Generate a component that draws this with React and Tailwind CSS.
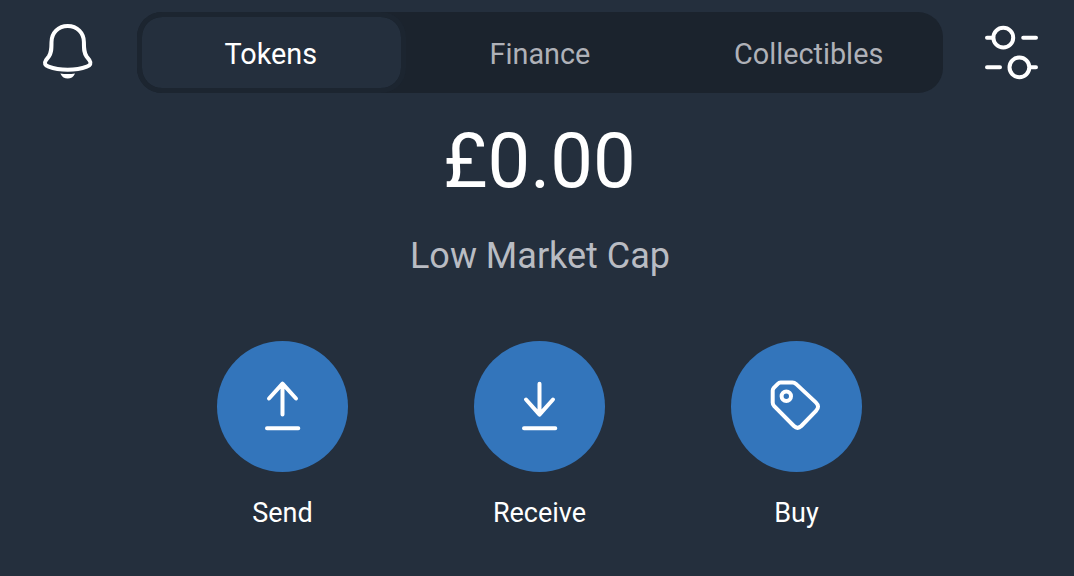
import React, { useState } from 'react';

const BellIcon = () => (
  <svg width="56" height="58" viewBox="0 0 56 58" fill="none" stroke="white" strokeWidth="4" strokeLinejoin="round">
    <path d="M27.7 4C18.2 4 11.5 11 11.5 20C11.5 28 11.3 31 8.8 34.5L5.9 38.3C3.8 41.4 5 43.2 8.6 44.6C19.5 48.7 35.9 48.7 46.8 44.6C50.4 43.2 51.6 41.4 49.5 38.3L46.6 34.5C44.1 31 43.9 28 43.9 20C43.9 11 37.2 4 27.7 4Z" />
    <path d="M20.3 51.4Q27.7 52.6 35.1 51.4Q32.5 56.6 27.7 56.6Q22.9 56.6 20.3 51.4Z" fill="white" stroke="none" />
  </svg>
);

const SlidersIcon = () => (
  <svg width="58" height="58" viewBox="0 0 58 58" fill="none" stroke="white" strokeWidth="4" strokeLinecap="round">
    <circle cx="20.3" cy="13.7" r="9.9" />
    <circle cx="36.4" cy="43.3" r="9.9" />
    <path d="M4 13.7H9M40.2 13.7H53M4 43.3H17M48 43.3H53" />
  </svg>
);

const actions = [
  {
    label: 'Send',
    icon: <path d="M65.5 43V73.5M52 57.5L65.5 42.7L79 57.5M50 87.3H81.3" />,
  },
  {
    label: 'Receive',
    icon: <path d="M65.5 42.7V73.5M52 58.5L65.5 73.7L79 58.5M50 87.3H81.3" />,
  },
  {
    label: 'Buy',
    icon: (
      <>
        <path d="M49.5 41.6H61.5Q63.5 41.6 65 42.9L84.8 61.4Q89.2 65.6 85 69.9L70.3 85Q66.6 88.6 62.9 85L43.2 65.2Q41.7 63.6 41.7 61.5V49.5Q41.7 48 42.8 46.8L46.8 42.8Q48 41.6 49.5 41.6Z" />
        <circle cx="55.3" cy="55.3" r="4.7" />
      </>
    ),
  },
];

const tabs = ['Tokens', 'Finance', 'Collectibles'];

const App = () => {
  const [activeTab, setActiveTab] = useState('Tokens');

  return (
    <div className="h-[576px] w-[1074px] overflow-hidden bg-[#242f3d] font-[Roboto,sans-serif] text-white">
      {/* Header */}
      <header className="flex items-start pt-3 pl-10">
        <button className="mt-2.5">
          <BellIcon />
        </button>

        <div className="ml-[41px] flex h-[81px] w-[806px] rounded-[25px] bg-[#1b232d]">
          {tabs.map((tab) => (
            <button
              key={tab}
              onClick={() => setActiveTab(tab)}
              className={`w-1/3 rounded-[25px] border-5 pt-[3px] text-[28.8px] leading-none ${
                activeTab === tab ? 'border-[#1c2530] bg-[#242f3d] bg-clip-padding pr-px text-white' : 'border-transparent text-[#afb1b8]'
              }`}
            >
              {tab}
            </button>
          ))}
        </div>

        <button className="mt-3 ml-10">
          <SlidersIcon />
        </button>
      </header>

      {/* Balance */}
      <div className="flex flex-col items-center pl-[5px]">
        <div className="mt-[30px] text-[76px] leading-[77px]">£0.00</div>
        <div className="mt-9 pl-px text-[36px] leading-[40px] text-[#b9bcc3]">Low Market Cap</div>
      </div>

      {/* Actions */}
      <div className="mt-[65px] flex justify-center gap-[126px] pl-[5px]">
        {actions.map(({ label, icon }) => (
          <button key={label} className="flex w-[131px] flex-col items-center">
            <span className="size-[131px] rounded-full bg-[#3375bb]">
              <svg
                width="131"
                height="131"
                viewBox="0 0 131 131"
                fill="none"
                stroke="white"
                strokeWidth="4"
                strokeLinecap="round"
                strokeLinejoin="round"
              >
                {icon}
              </svg>
            </span>
            <span className="mt-[25px] text-[27px] leading-8">{label}</span>
          </button>
        ))}
      </div>
    </div>
  );
};

export default App;
